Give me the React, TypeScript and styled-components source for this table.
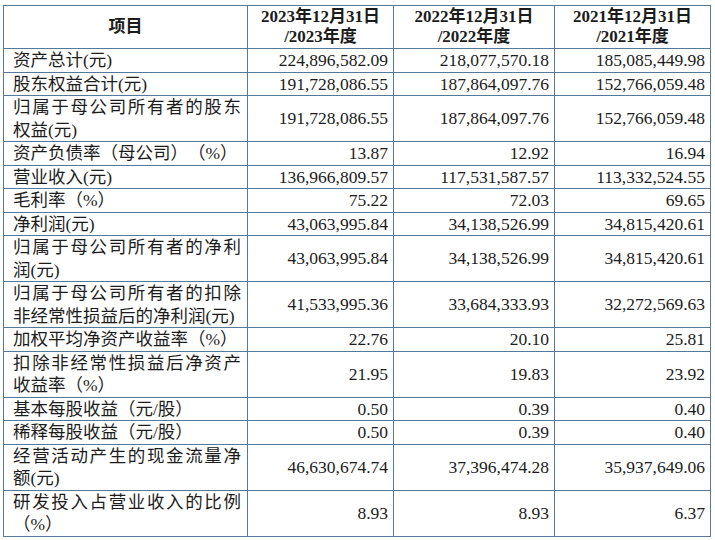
import styled, { createGlobalStyle } from 'styled-components';

const GlobalStyle = createGlobalStyle`
  html, body {
    margin: 0;
    padding: 0;
    background: #ffffff;
  }
`;

type Row = {
  label: string[];
  values: string[];
};

const rows: Row[] = [
  { label: ['资产总计(元)'], values: ['224,896,582.09', '218,077,570.18', '185,085,449.98'] },
  { label: ['股东权益合计(元)'], values: ['191,728,086.55', '187,864,097.76', '152,766,059.48'] },
  { label: ['归属于母公司所有者的股东', '权益(元)'], values: ['191,728,086.55', '187,864,097.76', '152,766,059.48'] },
  { label: ['资产负债率（母公司）（%）'], values: ['13.87', '12.92', '16.94'] },
  { label: ['营业收入(元)'], values: ['136,966,809.57', '117,531,587.57', '113,332,524.55'] },
  { label: ['毛利率（%）'], values: ['75.22', '72.03', '69.65'] },
  { label: ['净利润(元)'], values: ['43,063,995.84', '34,138,526.99', '34,815,420.61'] },
  { label: ['归属于母公司所有者的净利', '润(元)'], values: ['43,063,995.84', '34,138,526.99', '34,815,420.61'] },
  { label: ['归属于母公司所有者的扣除', '非经常性损益后的净利润(元)'], values: ['41,533,995.36', '33,684,333.93', '32,272,569.63'] },
  { label: ['加权平均净资产收益率（%）'], values: ['22.76', '20.10', '25.81'] },
  { label: ['扣除非经常性损益后净资产', '收益率（%）'], values: ['21.95', '19.83', '23.92'] },
  { label: ['基本每股收益（元/股）'], values: ['0.50', '0.39', '0.40'] },
  { label: ['稀释每股收益（元/股）'], values: ['0.50', '0.39', '0.40'] },
  { label: ['经营活动产生的现金流量净', '额(元)'], values: ['46,630,674.74', '37,396,474.28', '35,937,649.06'] },
  { label: ['研发投入占营业收入的比例', '（%）'], values: ['8.93', '8.93', '6.37'] },
];

const years = ['2023', '2022', '2021'];

export default function App() {
  return (
    <Page>
      <GlobalStyle />
      <Table>
        <HeadCell>项目</HeadCell>
        {years.map((y) => (
          <HeadCell key={y}>
            <span>{y}年12月31日</span>
            <span>/{y}年度</span>
          </HeadCell>
        ))}

        {rows.map((row, i) => (
          <DataRow key={i} row={row} />
        ))}
      </Table>
    </Page>
  );
}

const DataRow = ({ row }: { row: Row }) => (
  <>
    <LabelCell>
      {row.label.map((line, j) => (
        <LabelLine key={j} $justify={j < row.label.length - 1}>
          {line}
        </LabelLine>
      ))}
    </LabelCell>
    {row.values.map((v, j) => (
      <NumberCell key={j}>{v}</NumberCell>
    ))}
  </>
);

const Page = styled('div')`
  padding: 5px 0 0 3px;
`;

const Table = styled('div')`
  display: grid;
  grid-template-columns: 243px 145px 160px 155px;
  gap: 1px;
  padding: 1px;
  width: max-content;
  background-color: #55799a;
  color: #1c1c1c;
  font-family: 'Liberation Serif', 'Noto Sans CJK SC', serif;
  font-size: 17.5px;
  line-height: 22.5px;
  text-spacing-trim: space-all;
`;

const Cell = styled('div')`
  background-color: #ffffff;
  white-space: nowrap;
`;

const HeadCell = styled(Cell)`
  height: 42px;
  display: flex;
  flex-direction: column;
  align-items: center;
  justify-content: center;
  font-weight: 700;
  font-size: 17px;
  line-height: 20px;
`;

const LabelCell = styled(Cell)`
  padding: 0 6px 0 9px;
`;

const LabelLine = styled('div')<{ $justify: boolean }>`
  text-align: ${({ $justify }) => ($justify ? 'justify' : 'left')};
  text-align-last: ${({ $justify }) => ($justify ? 'justify' : 'auto')};
`;

const NumberCell = styled(Cell)`
  display: flex;
  align-items: center;
  justify-content: flex-end;
  padding-right: 5px;
`;
